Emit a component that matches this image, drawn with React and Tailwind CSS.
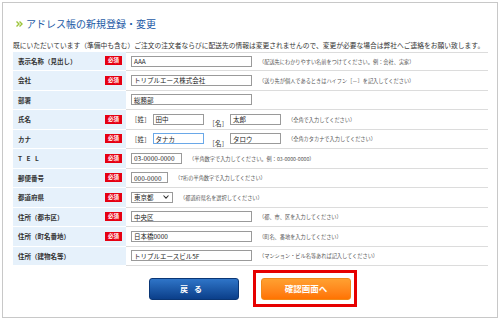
import React from "react";

const Badge = () => (
  <span className="flex h-[9px] w-[17px] items-center justify-center bg-[#e60012] text-[5.5px] font-bold leading-none text-white">
    必須
  </span>
);

const Field = ({ value, w, focus }) => (
  <span
    className={`flex h-[11px] items-center border bg-white pl-[2px] text-[6.5px] leading-none text-[#222] ${
      focus ? "border-[#6aa8e8]" : "border-[#9a9a9a]"
    } ${w}`}
  >
    {value}
  </span>
);

const Note = ({ children, ml = "ml-[7px]" }) => (
  <span className={`${ml} whitespace-nowrap text-[5.2px] leading-none text-[#555]`}>{children}</span>
);

const Row = ({ label, required, first, children, tracking }) => (
  <div className="flex h-[19.5px]">
    <div className="flex w-[113px] items-center justify-between border-b border-white bg-[#e6f1fb] pl-[5px] pr-[4px]">
      <span
        className={`whitespace-nowrap text-[6.5px] font-bold leading-none text-[#333] ${
          tracking ? "tracking-[4.5px]" : ""
        }`}
      >
        {label}
      </span>
      {required && <Badge />}
    </div>
    <div
      className={`flex flex-1 items-center border-b border-[#dcdcdc] pl-[5px] ${
        first ? "border-t" : ""
      }`}
    >
      {children}
    </div>
  </div>
);

const Bracket = ({ children }) => (
  <span className="whitespace-nowrap text-[6.5px] leading-none text-[#333]">{children}</span>
);

export default function App() {
  return (
    <div
      className="h-[319px] w-[500px] bg-white p-[2px]"
      style={{ fontFamily: '"Noto Sans CJK JP", "Noto Sans", sans-serif' }}
    >
      <div className="h-[316px] w-[496px] border border-[#c8c8c8] pl-[10px] pr-[9px] pt-[15px]">
        {/* Title */}
        <div className="flex h-[12px] items-center">
          <svg width="7" height="6" viewBox="0 0 7 6" className="ml-[3px] mr-[3px]">
            <path d="M0.5 0.5 L3 3 L0.5 5.5" fill="none" stroke="#9cc43a" strokeWidth="1.4" />
            <path d="M3.5 0.5 L6 3 L3.5 5.5" fill="none" stroke="#9cc43a" strokeWidth="1.4" />
          </svg>
          <span className="text-[10px] leading-none text-[#1d5aa6]">アドレス帳の新規登録・変更</span>
        </div>

        {/* Intro */}
        <p className="mt-[11px] h-[8px] whitespace-nowrap text-[6.75px] leading-[8px] text-[#333]">
          既にいただいています（準備中も含む）ご注文の注文者ならびに配送先の情報は変更されませんので、変更が必要な場合は弊社へご連絡をお願い致します。
        </p>

        {/* Form table */}
        <div className="mt-[2.5px] w-[475px]">
          <Row label="表示名称（見出し）" required first>
            <Field value="AAA" w="w-[121px]" />
            <Note>（配送先にわかりやすい名前をつけてください。例：会社、実家）</Note>
          </Row>
          <Row label="会社" required>
            <Field value="トリプルエース株式会社" w="w-[121px]" />
            <Note>（送り先が個人であるときはハイフン［－］を記入してください）</Note>
          </Row>
          <Row label="部署">
            <Field value="総務部" w="w-[121px]" />
          </Row>
          <Row label="氏名" required>
            <Bracket>［姓］</Bracket>
            <span className="ml-[2px]">
              <Field value="田中" w="w-[51px]" />
            </span>
            <span className="ml-[5px]">
              <Bracket>［名］</Bracket>
            </span>
            <span className="ml-[2px]">
              <Field value="太郎" w="w-[51px]" />
            </span>
            <Note>（全角で入力してください）</Note>
          </Row>
          <Row label="カナ" required>
            <Bracket>［姓］</Bracket>
            <span className="ml-[2px]">
              <Field value="タナカ" w="w-[51px]" focus />
            </span>
            <span className="ml-[5px]">
              <Bracket>［名］</Bracket>
            </span>
            <span className="ml-[2px]">
              <Field value="タロウ" w="w-[51px]" />
            </span>
            <Note>（全角カタカナで入力してください）</Note>
          </Row>
          <Row label="TEL" required tracking>
            <Field value="03-0000-0000" w="w-[51px]" />
            <Note>（半角数字で入力してください。例：03-0000-0000）</Note>
          </Row>
          <Row label="郵便番号" required>
            <Field value="000-0000" w="w-[37px]" />
            <Note>（7桁の半角数字で入力してください）</Note>
          </Row>
          <Row label="都道府県" required>
            <span className="flex h-[11px] w-[42px] items-center justify-between border border-[#9a9a9a] bg-white pl-[2px] pr-[3px] text-[6.5px] leading-none text-[#222]">
              東京都
              <svg width="6" height="4" viewBox="0 0 6 4">
                <path d="M0.5 0.5 L3 3.2 L5.5 0.5" fill="none" stroke="#333" strokeWidth="1.1" />
              </svg>
            </span>
            <Note>（都道府県名を選択してください）</Note>
          </Row>
          <Row label="住所（都市区）" required>
            <Field value="中央区" w="w-[121px]" />
            <Note>（都、市、区を入力してください）</Note>
          </Row>
          <Row label="住所（町名番地）" required>
            <Field value="日本橋0000" w="w-[121px]" />
            <Note>（町名、番地を入力してください）</Note>
          </Row>
          <Row label="住所（建物名等）">
            <Field value="トリプルエースビル5F" w="w-[121px]" />
            <Note>（マンション・ビル名等あれば記入してください）</Note>
          </Row>
        </div>

        {/* Buttons */}
        <div className="mt-[4px] flex items-center pl-[136px]">
          <button className="flex h-[22px] w-[90px] items-center justify-center rounded-[3px] border border-[#0a3675] bg-gradient-to-b from-[#2f75c8] to-[#0b3f8a] text-[8px] font-bold tracking-[6px] text-white">
            戻る
          </button>
          <div className="ml-[14px] flex h-[37px] w-[104px] items-center border-[3px] border-[#e60000] pl-[5px]">
            <button className="flex h-[22px] w-[90px] items-center justify-center rounded-[3px] border border-[#f08a1a] bg-gradient-to-b from-[#ffa030] to-[#ff7300] text-[8.5px] font-bold text-white">
              確認画面へ
            </button>
          </div>
        </div>
      </div>
    </div>
  );
}
